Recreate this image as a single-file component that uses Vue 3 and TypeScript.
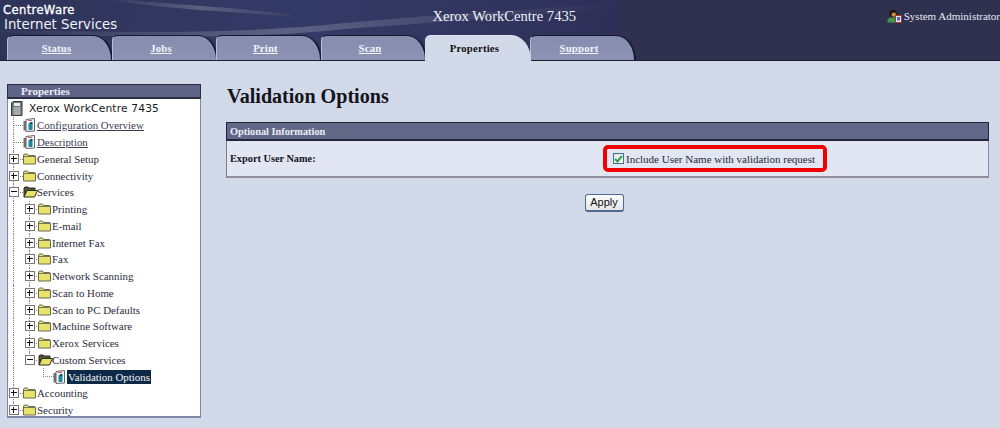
<script setup lang="ts">
type Kind = 'folder' | 'open' | 'doc';
interface Row { label: string; depth: number; kind: Kind; toggle?: '+' | '-'; link?: boolean; selected?: boolean }
const tabs = ['Status', 'Jobs', 'Print', 'Scan', 'Properties', 'Support'];
const rows: Row[] = [
  { label: 'Configuration Overview', depth: 0, kind: 'doc', link: true },
  { label: 'Description', depth: 0, kind: 'doc', link: true },
  { label: 'General Setup', depth: 0, kind: 'folder', toggle: '+' },
  { label: 'Connectivity', depth: 0, kind: 'folder', toggle: '+' },
  { label: 'Services', depth: 0, kind: 'open', toggle: '-' },
  { label: 'Printing', depth: 1, kind: 'folder', toggle: '+' },
  { label: 'E-mail', depth: 1, kind: 'folder', toggle: '+' },
  { label: 'Internet Fax', depth: 1, kind: 'folder', toggle: '+' },
  { label: 'Fax', depth: 1, kind: 'folder', toggle: '+' },
  { label: 'Network Scanning', depth: 1, kind: 'folder', toggle: '+' },
  { label: 'Scan to Home', depth: 1, kind: 'folder', toggle: '+' },
  { label: 'Scan to PC Defaults', depth: 1, kind: 'folder', toggle: '+' },
  { label: 'Machine Software', depth: 1, kind: 'folder', toggle: '+' },
  { label: 'Xerox Services', depth: 1, kind: 'folder', toggle: '+' },
  { label: 'Custom Services', depth: 1, kind: 'open', toggle: '-' },
  { label: 'Validation Options', depth: 2, kind: 'doc', selected: true },
  { label: 'Accounting', depth: 0, kind: 'folder', toggle: '+' },
  { label: 'Security', depth: 0, kind: 'folder', toggle: '+' },
];
</script>

<template>
  <div class="page">
    <header class="header">
      <svg class="swoosh" viewBox="0 0 620 61" preserveAspectRatio="none" aria-hidden="true">
        <defs>
          <linearGradient id="sw" x1="0" x2="1">
            <stop offset="0" stop-color="#fff" stop-opacity="0.02" />
            <stop offset="0.45" stop-color="#fff" stop-opacity="0.2" />
            <stop offset="1" stop-color="#fff" stop-opacity="0" />
          </linearGradient>
        </defs>
        <path d="M0 30 C120 34 250 34 340 24 C420 16 520 10 620 4 L620 8 C520 16 420 24 340 30 C250 40 120 38 0 33Z" fill="url(#sw)" />
        <path d="M130 0 C180 6 270 8 310 20 C290 14 180 12 110 0Z" fill="url(#sw)" />
      </svg>
      <div class="top">
        <div class="brand">
          <div class="brand-a">CentreWare</div>
          <div class="brand-b">Internet Services</div>
        </div>
        <div class="device">Xerox WorkCentre 7435</div>
        <div class="user">
          <svg width="15" height="14" viewBox="0 0 15 14" aria-hidden="true">
            <circle cx="6" cy="4.5" r="3.8" fill="#1d1a14" />
            <circle cx="6.8" cy="5.6" r="2.2" fill="#c9943e" />
            <path d="M0.5 13.5 V10.5 L3 8.5 H8 V13.5Z" fill="#3f9a48" />
            <rect x="8.5" y="6.5" width="6" height="7" fill="#dfe4f2" stroke="#b3301f" />
            <rect x="10" y="8" width="3" height="3.5" fill="#4a6cc0" />
          </svg>
          <span>System Administrator</span>
        </div>
      </div>
      <nav class="tabs">
        <a v-for="t in tabs" :key="t" class="tab" :class="{ active: t === 'Properties' }">{{ t }}</a>
      </nav>
    </header>

    <div class="body">
      <aside class="side">
        <div class="side-title">Properties</div>
        <div class="tree">
          <div class="root">
            <svg width="14" height="15" viewBox="0 0 14 15" aria-hidden="true">
              <path d="M3 0.5 H12 V14.5 H1.5 V2Z" fill="#73787d" stroke="#33373a" />
              <rect x="4" y="2" width="6" height="3" fill="#e7ebee" />
              <path d="M3.5 7h7M3.5 9h7M3.5 11h7M3.5 13h7" stroke="#d5d9dc" />
            </svg>
            <span>Xerox WorkCentre 7435</span>
          </div>
          <div v-for="r in rows" :key="r.label" class="row" :class="'d' + r.depth">
            <span class="guide" :class="{ last: r.label === 'Security' }"></span>
            <span v-if="r.depth === 1" class="guide inner" :class="{ end: r.label === 'Custom Services' }"></span>
            <span v-if="r.depth > 1" class="guide elbow"></span>
            <span class="toggle-slot">
              <span v-if="r.toggle" class="toggle">
                <i class="h"></i><i v-if="r.toggle === '+'" class="v"></i>
              </span>
            </span>
            <svg v-if="r.kind === 'folder'" class="ico" width="13" height="12" viewBox="0 0 13 12" aria-hidden="true">
              <path d="M0.5 3 Q0.5 1 2 1 H4.5 L5.5 2.5 H11.5 Q12.5 2.5 12.5 3.5 V11 H0.5Z" fill="#e7e36a" stroke="#6b6b55" />
              <path d="M1 3.5 H12" stroke="#77775e" />
            </svg>
            <svg v-else-if="r.kind === 'open'" class="ico open" width="15" height="12" viewBox="0 0 15 12" aria-hidden="true">
              <path d="M1 11 V2 L2 1 H5 L6 2 H12 V4" fill="#55533a" stroke="#2c2b1c" />
              <path d="M1 11 L4 4.5 H14.5 L11.5 11Z" fill="#e7e36a" stroke="#2c2b1c" />
            </svg>
            <svg v-else class="ico" width="13" height="14" viewBox="0 0 13 14" aria-hidden="true">
              <path d="M3 1.5 L11.5 0.5 V13 L3 13.5Z" fill="#f4f4f4" stroke="#666" />
              <path d="M0.5 3 H3 V12.5 H0.5Z" fill="#6e6e6e" />
              <path d="M5 2.5 H9" stroke="#c9607f" />
              <rect x="5.5" y="5" width="4" height="7" rx="1" fill="#1c8a9e" />
              <path d="M7 4 L9.5 4 V6 H7Z" fill="#0d5a68" />
            </svg>
            <span class="label" :class="{ link: r.link, selected: r.selected }">{{ r.label }}</span>
          </div>
        </div>
      </aside>

      <main class="main">
        <h1>Validation Options</h1>
        <section class="panel">
          <div class="panel-head">Optional Information</div>
          <div class="panel-row">
            <div class="field">Export User Name:</div>
            <div class="value">
              <label class="mark">
                <span class="check">
                  <svg width="9" height="8" viewBox="0 0 9 8" aria-hidden="true">
                    <path d="M1 4 L3.5 6.5 L8 1" fill="none" stroke="#22a53a" stroke-width="2" />
                  </svg>
                </span>
                Include User Name with validation request
              </label>
            </div>
          </div>
        </section>
        <div class="actions"><button type="button" class="apply">Apply</button></div>
      </main>
    </div>
  </div>
</template>

<style>
html, body { margin: 0; background: #d2d9e8; }
</style>

<style scoped>
.page {
  width: 1000px;
  height: 428px;
  overflow: hidden;
  background: #d2d9e8;
  font-family: "Liberation Serif", serif;
  color: #1a1a1a;
}
.header {
  position: relative;
  height: 61px;
  box-sizing: border-box;
  border-bottom: 1px solid #1c1e38;
  background: linear-gradient(90deg, #2e3358 0%, #343a66 30%, #2e3058 62%, #2f3150 62%, #2f3150 100%);
}
.swoosh {
  position: absolute;
  left: 0;
  top: 0;
  width: 620px;
  height: 60px;
}
.top {
  position: relative;
  height: 35px;
  display: flex;
}
.brand {
  width: 433px;
  padding: 4px 0 0 3px;
  box-sizing: border-box;
  color: #fff;
  font-family: "DejaVu Sans", sans-serif;
}
.brand-a { font-size: 11.6px; line-height: 13px; -webkit-text-stroke: 0.3px #fff; letter-spacing: 0.35px; }
.brand-b { font-size: 13.3px; line-height: 16px; color: #f0f1f7; margin-left: 1px; }
.device {
  width: 455px;
  padding-top: 8px;
  color: #f2f3f8;
  font-size: 14.6px;
  line-height: 17px;
}
.user {
  flex: 1;
  display: flex;
  align-items: flex-start;
  gap: 2px;
  padding-top: 9px;
  color: #e8eaf2;
  font-size: 11px;
  line-height: 14px;
  white-space: nowrap;
}
.tabs {
  position: relative;
  display: flex;
  height: 25px;
  padding-left: 7px;
  box-sizing: border-box;
}
.tab {
  width: 106px;
  margin-right: -1.5px;
  height: 25px;
  padding-right: 6px;
  box-sizing: border-box;
  border-top: 1px solid #16182e;
  border-left: 1px solid #b8bdd2;
  border-right: 2px solid #16182e;
  border-radius: 6px 20px 0 0 / 5px 25px 0 0;
  background: linear-gradient(#868daf, #8b92b4);
  color: #f2f3f8;
  font-size: 10.7px;
  font-weight: 700;
  line-height: 24px;
  text-align: center;
  text-decoration: underline;
  letter-spacing: 0.2px;
}
.tab.active {
  position: relative;
  z-index: 1;
  height: 26px;
  background: #d2d9e8;
  border-top-color: #dfe4ef;
  border-left-color: #d2d9e8;
  border-right-color: #d2d9e8;
  color: #111;
  text-decoration: none;
}
.body {
  display: flex;
  padding: 23px 11px 0 7px;
  gap: 25px;
}
.side {
  width: 194px;
  height: 334px;
  box-sizing: border-box;
  flex: none;
  background: #fff;
  border: 1px solid #7f86a6;
  border-top: 0;
  border-bottom-width: 2px;
}
.side-title {
  height: 15px;
  margin: 0 -1px;
  box-sizing: border-box;
  background: #5f6487;
  border: 1px solid #2c2e48;
  border-width: 1px 1px 2px;
  color: #eceef6;
  font-size: 11px;
  font-weight: 700;
  line-height: 13px;
  padding-left: 13px;
}
.tree { padding-top: 1px; }
.root {
  height: 17px;
  display: flex;
  align-items: center;
  gap: 5px;
  padding-left: 2px;
  font-family: "DejaVu Sans", sans-serif;
  font-size: 10.7px;
  letter-spacing: 0.15px;
}
.row {
  position: relative;
  height: 16.75px;
  display: flex;
  align-items: center;
  padding-left: 1px;
  font-size: 10.9px;
  white-space: nowrap;
}
.guide {
  position: absolute;
  left: 5px;
  top: 0;
  bottom: 0;
  border-left: 1px dotted #888;
}
.guide.last { bottom: 9px; }
.guide.inner { left: 21px; }
.guide.inner.end { bottom: 8px; }
.guide.elbow {
  left: 35px;
  bottom: 8px;
  width: 10px;
  border-bottom: 1px dotted #888;
}
.toggle-slot {
  position: relative;
  width: 14px;
  height: 14px;
  flex: none;
  display: flex;
  align-items: center;
  background: repeating-linear-gradient(90deg, #888 0 1px, transparent 1px 2px) 5px 7px / 9px 1px no-repeat;
}
.toggle {
  position: relative;
  width: 8px;
  height: 8px;
  border: 1px solid #777;
  background: #fff;
}
.toggle .h { position: absolute; left: 1px; right: 1px; top: 3px; height: 1px; background: #111; }
.toggle .v { position: absolute; top: 1px; bottom: 1px; left: 3px; width: 1px; background: #111; }
.d1 { padding-left: 17px; }
.d1 .toggle-slot { width: 13px; }
.d2 { padding-left: 37px; }
.d2 .toggle-slot { width: 8px; background: none; }
.ico { flex: none; position: relative; }
.ico.open { margin-right: -2px; }
.label { position: relative; margin-left: 1px; line-height: 14px; color: #2a2a3a; }
.label.link { text-decoration: underline; color: #3c3c50; }
.label.selected {
  background: #0c2a46;
  color: #f4f6fb;
  padding: 0 1px;
}
.main { flex: 1; min-width: 0; }
h1 {
  margin: 0;
  height: 38px;
  font-size: 20.1px;
  line-height: 24px;
  font-weight: 700;
  color: #14141c;
  padding-left: 1px;
}
.panel {
  border: 1px solid #8b8f9b;
  border-top: 0;
  border-bottom-width: 2px;
  border-left-color: #7a7d88;
}
.panel-head {
  height: 19px;
  box-sizing: border-box;
  margin: 0 -1px;
  background: #626888;
  border: 1px solid #22243a;
  border-bottom-width: 2px;
  color: #eceef6;
  font-size: 10.3px;
  font-weight: 700;
  line-height: 18px;
  padding-left: 3px;
}
.panel-row {
  height: 35px;
  display: flex;
  align-items: center;
  background: #e1e6f2;
}
.field {
  width: 376px;
  flex: none;
  padding-left: 3px;
  box-sizing: border-box;
  font-size: 10.3px;
  font-weight: 700;
  color: #14141c;
}
.mark {
  display: flex;
  align-items: center;
  width: 224px;
  height: 27px;
  box-sizing: border-box;
  border: 4px solid #f00000;
  border-radius: 5px;
  padding-left: 6px;
  font-size: 11px;
  white-space: nowrap;
  color: #28283a;
}
.check {
  width: 11px;
  height: 11px;
  box-sizing: border-box;
  flex: none;
  margin-right: 2px;
  display: flex;
  align-items: center;
  justify-content: center;
  border: 1px solid #4a6a8c;
  background: linear-gradient(135deg, #dfe3ea, #fff);
}
.actions {
  display: flex;
  justify-content: center;
  padding-top: 16px;
  padding-right: 7px;
}
.apply {
  width: 39px;
  height: 18px;
  padding: 0;
  box-sizing: border-box;
  border: 1px solid #4e6a8e;
  border-bottom-width: 2px;
  border-radius: 3px;
  background: linear-gradient(#fcfcfc, #e6e6ea);
  color: #111;
  font-family: "Liberation Sans", sans-serif;
  font-size: 11px;
  line-height: 15px;
}
</style>
